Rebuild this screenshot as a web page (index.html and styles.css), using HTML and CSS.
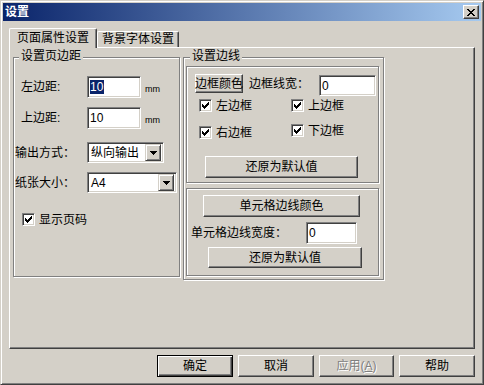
FILE: index.html
```html
<!DOCTYPE html>
<html lang="zh">
<head>
<meta charset="utf-8">
<title>设置</title>
<link rel="stylesheet" href="styles.css">
</head>
<body>
<div class="window">
  <div class="titlebar">
    <span class="title">设置</span>
    <span class="close"><svg width="8" height="7" viewBox="0 0 8 7" shape-rendering="crispEdges"><path d="M0 0h2v1H0zM6 0h2v1H6zM1 1h2v1H1zM5 1h2v1H5zM2 2h4v1H2zM3 3h2v1H3zM2 4h4v1H2zM1 5h2v1H1zM5 5h2v1H5zM0 6h2v1H0zM6 6h2v1H6z"/></svg></span>
  </div>

  <div class="tabs">
    <div class="tab tab-active">页面属性设置</div>
    <div class="tab tab-plain">背景字体设置</div>
  </div>

  <div class="panel">
    <div class="group g-margin">
      <span class="legend lg-margin">设置页边距</span>

      <div class="row row-left">
        <span class="lbl lbl-short">左边距:</span>
        <span class="field fld-margin"><span class="sel">10</span></span>
        <span class="unit">mm</span>
      </div>
      <div class="row row-top">
        <span class="lbl lbl-short">上边距:</span>
        <span class="field fld-margin">10</span>
        <span class="unit">mm</span>
      </div>
      <div class="row row-out">
        <span class="lbl lbl-long">输出方式：</span>
        <span class="combo cb-out"><span class="cb-text">纵向输出</span><span class="cb-btn"><svg width="7" height="4" viewBox="0 0 7 4" shape-rendering="crispEdges"><path d="M0 0h7v1H0zM1 1h5v1H1zM2 2h3v1H2zM3 3h1v1H3z"/></svg></span></span>
      </div>
      <div class="row row-paper">
        <span class="lbl lbl-long">纸张大小：</span>
        <span class="combo cb-paper"><span class="cb-text">A4</span><span class="cb-btn"><svg width="7" height="4" viewBox="0 0 7 4" shape-rendering="crispEdges"><path d="M0 0h7v1H0zM1 1h5v1H1zM2 2h3v1H2zM3 3h1v1H3z"/></svg></span></span>
      </div>
      <div class="row row-page">
        <span class="check"><svg width="7" height="7" viewBox="0 0 7 7" shape-rendering="crispEdges"><path d="M0 2h1v3H0zM1 3h1v3H1zM2 4h1v3H2zM3 3h1v3H3zM4 2h1v3H4zM5 1h1v3H5zM6 0h1v3H6z"/></svg></span>
        <span class="check-text">显示页码</span>
      </div>
    </div>

    <div class="group g-border">
      <span class="legend lg-border">设置边线</span>

      <div class="box box-frame">
        <div class="row row-color">
          <span class="btn btn-color">边框颜色</span>
          <span class="lbl lbl-width">边框线宽：</span>
          <span class="field fld-width">0</span>
        </div>
        <div class="row row-cb1">
          <span class="cb-item">
            <span class="check"><svg width="7" height="7" viewBox="0 0 7 7" shape-rendering="crispEdges"><path d="M0 2h1v3H0zM1 3h1v3H1zM2 4h1v3H2zM3 3h1v3H3zM4 2h1v3H4zM5 1h1v3H5zM6 0h1v3H6z"/></svg></span>
            <span class="check-text">左边框</span>
          </span>
          <span class="cb-item">
            <span class="check"><svg width="7" height="7" viewBox="0 0 7 7" shape-rendering="crispEdges"><path d="M0 2h1v3H0zM1 3h1v3H1zM2 4h1v3H2zM3 3h1v3H3zM4 2h1v3H4zM5 1h1v3H5zM6 0h1v3H6z"/></svg></span>
            <span class="check-text">上边框</span>
          </span>
        </div>
        <div class="row row-cb2">
          <span class="cb-item cb-low">
            <span class="check"><svg width="7" height="7" viewBox="0 0 7 7" shape-rendering="crispEdges"><path d="M0 2h1v3H0zM1 3h1v3H1zM2 4h1v3H2zM3 3h1v3H3zM4 2h1v3H4zM5 1h1v3H5zM6 0h1v3H6z"/></svg></span>
            <span class="check-text">右边框</span>
          </span>
          <span class="cb-item">
            <span class="check"><svg width="7" height="7" viewBox="0 0 7 7" shape-rendering="crispEdges"><path d="M0 2h1v3H0zM1 3h1v3H1zM2 4h1v3H2zM3 3h1v3H3zM4 2h1v3H4zM5 1h1v3H5zM6 0h1v3H6z"/></svg></span>
            <span class="check-text">下边框</span>
          </span>
        </div>
        <span class="btn btn-reset1">还原为默认值</span>
      </div>

      <div class="box box-cell">
        <span class="btn btn-cellcolor">单元格边线颜色</span>
        <div class="row row-cellwidth">
          <span class="lbl lbl-cell">单元格边线宽度：</span>
          <span class="field fld-cell">0</span>
        </div>
        <span class="btn btn-reset2">还原为默认值</span>
      </div>
    </div>
  </div>

  <div class="buttons">
    <span class="btn btn-default btn-w76">确定</span>
    <span class="btn btn-w76">取消</span>
    <span class="btn btn-disabled btn-w75">应用(<u>A</u>)</span>
    <span class="btn btn-w76">帮助</span>
  </div>
</div>
</body>
</html>
```

FILE: styles.css
```css
html, body {
  margin: 0;
  padding: 0;
  background: #d4d0c8;
}

body {
  font-family: "Liberation Sans", "Noto Sans CJK SC", sans-serif;
  font-size: 12px;
  line-height: 14px;
  color: #000;
}

.window {
  width: 484px;
  height: 385px;
  box-sizing: border-box;
  background: #d4d0c8;
  border: 1px solid;
  border-color: #d4d0c8 #404040 #404040 #d4d0c8;
  box-shadow: inset 1px 1px #fff, inset -1px -1px #808080;
  padding: 2px;
}

/* title bar */
.titlebar {
  height: 18px;
  display: flex;
  align-items: center;
  justify-content: space-between;
  background: linear-gradient(to right, #0a246a, #a6caf0);
}

.title {
  color: #fff;
  font-weight: bold;
  padding-left: 2px;
}

.close {
  width: 16px;
  height: 14px;
  box-sizing: border-box;
  margin-right: 2px;
  display: flex;
  align-items: center;
  justify-content: center;
  background: #d4d0c8;
  border: 1px solid;
  border-color: #fff #404040 #404040 #fff;
  box-shadow: inset -1px -1px #808080;
}

/* tabs */
.tabs {
  display: flex;
  align-items: flex-end;
  height: 27px;
  margin: 0 6px;
  position: relative;
  z-index: 1;
}

.tab {
  box-sizing: border-box;
  background: #d4d0c8;
  border-left: 1px solid #fff;
  border-top: 1px solid #fff;
  border-right: 1px solid #404040;
  box-shadow: inset -1px 0 #808080;
  border-radius: 2px 2px 0 0;
  text-align: center;
  white-space: nowrap;
}

.tab-active {
  width: 88px;
  height: 20px;
  padding-top: 2px;
}

.tab-plain {
  width: 82px;
  height: 16px;
  margin-bottom: 1px;
  padding-top: 0;
}

/* panel */
.panel {
  width: 466px;
  height: 302px;
  box-sizing: border-box;
  margin: -1px 6px 0 6px;
  border: 1px solid;
  border-color: #fff #404040 #404040 #fff;
  box-shadow: inset -1px -1px #808080;
  display: flex;
  align-items: flex-start;
}

/* etched group boxes */
.group, .box {
  box-sizing: border-box;
  border: 1px solid #808080;
  box-shadow: inset 1px 1px #fff, 1px 1px #fff;
  position: relative;
}

.g-margin {
  width: 167px;
  height: 220px;
  margin: 9px 0 0 3px;
}

.g-border {
  width: 201px;
  height: 223px;
  margin: 9px 0 0 3px;
}

.legend {
  position: absolute;
  top: -9px;
  background: #d4d0c8;
  padding: 0 2px;
  white-space: nowrap;
}

.lg-margin { left: 5px; }
.lg-border { left: 6px; }

.row {
  display: flex;
  align-items: center;
}

.lbl {
  white-space: nowrap;
  flex: none;
}

/* fields */
.field {
  box-sizing: border-box;
  height: 22px;
  background: #fff;
  border: 1px solid;
  border-color: #808080 #fff #fff #808080;
  box-shadow: inset 1px 1px #404040, inset -1px -1px #d4d0c8;
  padding: 3px 0 0 2px;
  flex: none;
}

.sel {
  background: #0a246a;
  color: #fff;
  display: inline-block;
  padding: 0 1px 0 0;
}

.unit {
  font-size: 9px;
  margin: 4px 0 0 4px;
}

/* left group rows */
.row-left { margin-top: 18px; height: 22px; }
.row-top { margin-top: 9px; height: 22px; }
.row-out { margin-top: 13px; height: 21px; }
.row-paper { margin-top: 9px; height: 21px; }
.row-page { margin-top: 20px; height: 13px; }

.lbl-short { width: 66px; margin-left: 7px; }
.lbl-long { width: 72px; margin-left: 1px; }
.fld-margin { width: 54px; }

/* combo */
.combo {
  box-sizing: border-box;
  height: 21px;
  background: #fff;
  border: 1px solid;
  border-color: #808080 #fff #fff #808080;
  box-shadow: inset 1px 1px #404040, inset -1px -1px #d4d0c8;
  padding: 2px;
  display: flex;
  align-items: center;
  justify-content: space-between;
  flex: none;
}

.cb-out { width: 77px; }
.cb-paper { width: 90px; }

.cb-text { padding-left: 1px; }

.cb-btn {
  box-sizing: border-box;
  width: 16px;
  height: 17px;
  background: #d4d0c8;
  border: 1px solid;
  border-color: #d4d0c8 #404040 #404040 #d4d0c8;
  box-shadow: inset 1px 1px #fff, inset -1px -1px #808080;
  display: flex;
  align-items: center;
  justify-content: center;
}

/* checkbox */
.check {
  box-sizing: border-box;
  width: 13px;
  height: 13px;
  background: #fff;
  border: 1px solid;
  border-color: #808080 #fff #fff #808080;
  box-shadow: inset 1px 1px #404040, inset -1px -1px #d4d0c8;
  display: flex;
  align-items: center;
  justify-content: center;
  flex: none;
}

.check-text {
  margin-left: 4px;
  white-space: nowrap;
}

.row-page .check { margin-left: 8px; }

/* buttons */
.btn {
  box-sizing: border-box;
  display: flex;
  align-items: center;
  justify-content: center;
  background: #d4d0c8;
  border: 1px solid;
  border-color: #fff #404040 #404040 #fff;
  box-shadow: inset -1px -1px #808080;
  white-space: nowrap;
  flex: none;
}

/* right group */
.box-frame {
  width: 193px;
  height: 117px;
  margin: 8px 0 0 2px;
}

.box-cell {
  width: 193px;
  height: 88px;
  margin: 5px 0 0 2px;
}

.row-color {
  margin-top: 7px;
  height: 22px;
  align-items: flex-start;
}

.btn-color {
  width: 48px;
  height: 19px;
  margin-left: 8px;
}

.lbl-width {
  width: 70px;
  margin-left: 6px;
  line-height: 20px;
}

.fld-width {
  width: 57px;
  height: 21px;
  margin-top: 1px;
}

.row-cb1 {
  margin-top: 3px;
  height: 13px;
  align-items: flex-start;
}

.row-cb2 {
  margin-top: 12px;
  height: 15px;
  align-items: flex-start;
}

.cb-item {
  display: flex;
  align-items: center;
  height: 13px;
}

.cb-item:first-child {
  width: 92px;
  margin-left: 12px;
}

.cb-low { margin-top: 2px; }

.btn-reset1 {
  width: 153px;
  height: 22px;
  margin: 17px 0 0 18px;
}

.btn-cellcolor {
  width: 157px;
  height: 22px;
  margin: 6px 0 0 16px;
}

.row-cellwidth {
  margin-top: 5px;
  height: 22px;
}

.lbl-cell {
  width: 115px;
  margin-left: 4px;
}

.fld-cell { width: 51px; }

.btn-reset2 {
  width: 154px;
  height: 21px;
  margin: 3px 0 0 21px;
}

/* bottom buttons */
.buttons {
  display: flex;
  justify-content: flex-end;
  gap: 5px;
  margin: 6px 6px 0 0;
  height: 22px;
}

.btn-w76 { width: 76px; height: 22px; }
.btn-w75 { width: 75px; height: 22px; }

.btn-default {
  border: 1px solid #000;
  box-shadow: inset 1px 1px #fff, inset -1px -1px #404040, inset -2px -2px #808080;
}

.btn-disabled {
  color: #808080;
  text-shadow: 1px 1px #fff;
}
```
